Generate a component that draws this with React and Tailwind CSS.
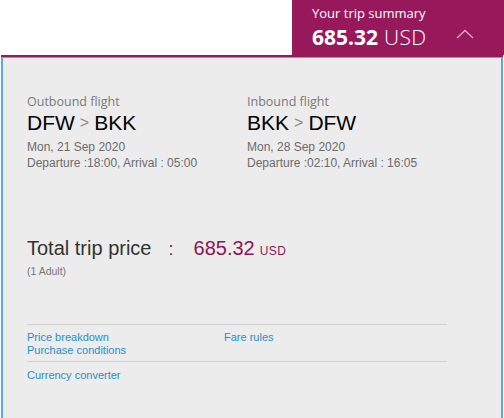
export default function App() {
  const flights = [
    { label: 'Outbound flight', from: 'DFW', to: 'BKK', date: 'Mon, 21 Sep 2020', times: 'Departure :18:00, Arrival : 05:00' },
    { label: 'Inbound flight', from: 'BKK', to: 'DFW', date: 'Mon, 28 Sep 2020', times: 'Departure :02:10, Arrival : 16:05' },
  ];

  return (
    <div className="w-[504px] h-[418px] bg-white overflow-hidden relative">
      {/* header */}
      <div className="flex justify-end h-[55px]">
        <div className="w-[212px] h-[55px] bg-[#98195b] text-white pl-[20px] pt-[5px] flex">
          <div className="flex-1">
            <div className="text-[13px] leading-[17px] font-['Open_Sans',sans-serif]">Your trip summary</div>
            <div className="flex items-baseline gap-[6px] mt-[2px] font-['Open_Sans',sans-serif]">
              <span className="text-[21px] leading-[26px] font-bold">685.32</span>
              <span className="text-[21px] leading-[26px] font-light tracking-[0.3px]">USD</span>
            </div>
          </div>
          <div className="w-[56px] pt-[24px] pl-[8px]">
            <svg width="18" height="10" viewBox="0 0 18 10" fill="none">
              <path d="M1 9 L9 1.5 L17 9" stroke="#e2a9c6" strokeWidth="1.3" />
            </svg>
          </div>
        </div>
      </div>

      {/* panel */}
      <div className="ml-[1px] w-[502px] h-[363px] border-t-2 border-t-[#98195b] bg-[#ececec] relative">
        <div className="absolute inset-0 border-x-2 border-t border-[#5aa9e6] pointer-events-none" />
        <div className="pl-[26px] pt-[37px] pr-[30px]">
          <div className="flex">
            {flights.map((f) => (
              <div key={f.label} className="w-[220px] shrink-0">
                <div className="text-[12.5px] leading-[16px] text-[#7a7a7a] font-['Open_Sans',sans-serif]">{f.label}</div>
                <div className="flex items-center text-[21px] leading-[24px] text-black font-['Liberation_Sans',Arial,sans-serif] mt-[1px]">
                  <span>{f.from}</span>
                  <span className="text-[16px] text-[#888] mx-[5px]">&gt;</span>
                  <span>{f.to}</span>
                </div>
                <div className="text-[12px] leading-[16px] text-[#6b6b6b] font-['Liberation_Sans',Arial,sans-serif] mt-[4px]">{f.date}</div>
                <div className="text-[12px] leading-[16px] text-[#6b6b6b] font-['Liberation_Sans',Arial,sans-serif]">{f.times}</div>
              </div>
            ))}
          </div>

          <div className="mt-[62px] font-['Liberation_Sans',Arial,sans-serif]">
            <div className="flex items-baseline">
              <span className="text-[20px] leading-[24px] text-[#333]">Total trip price</span>
              <span className="text-[18px] text-[#8c1553] ml-[17px]">:</span>
              <span className="text-[20px] text-[#8c1553] ml-[20px]">685.32</span>
              <span className="text-[12px] text-[#8c1553] ml-[5px] tracking-[0.4px]">USD</span>
            </div>
            <div className="text-[10.5px] leading-[12px] text-[#777] mt-[2px]">(1 Adult)</div>
          </div>

          <div className="mt-[47px] w-[420px] font-['Liberation_Sans',Arial,sans-serif] text-[11px] leading-[13px] text-[#268fce]">
            <div className="border-t border-[#d2d2d2] pt-[6px] pb-[4px] grid grid-cols-[197px_1fr]">
              <div>
                <div>Price breakdown</div>
                <div>Purchase conditions</div>
              </div>
              <div>Fare rules</div>
            </div>
            <div className="border-t border-[#d2d2d2] pt-[7px]">
              <div>Currency converter</div>
            </div>
          </div>
        </div>
      </div>
    </div>
  );
}
